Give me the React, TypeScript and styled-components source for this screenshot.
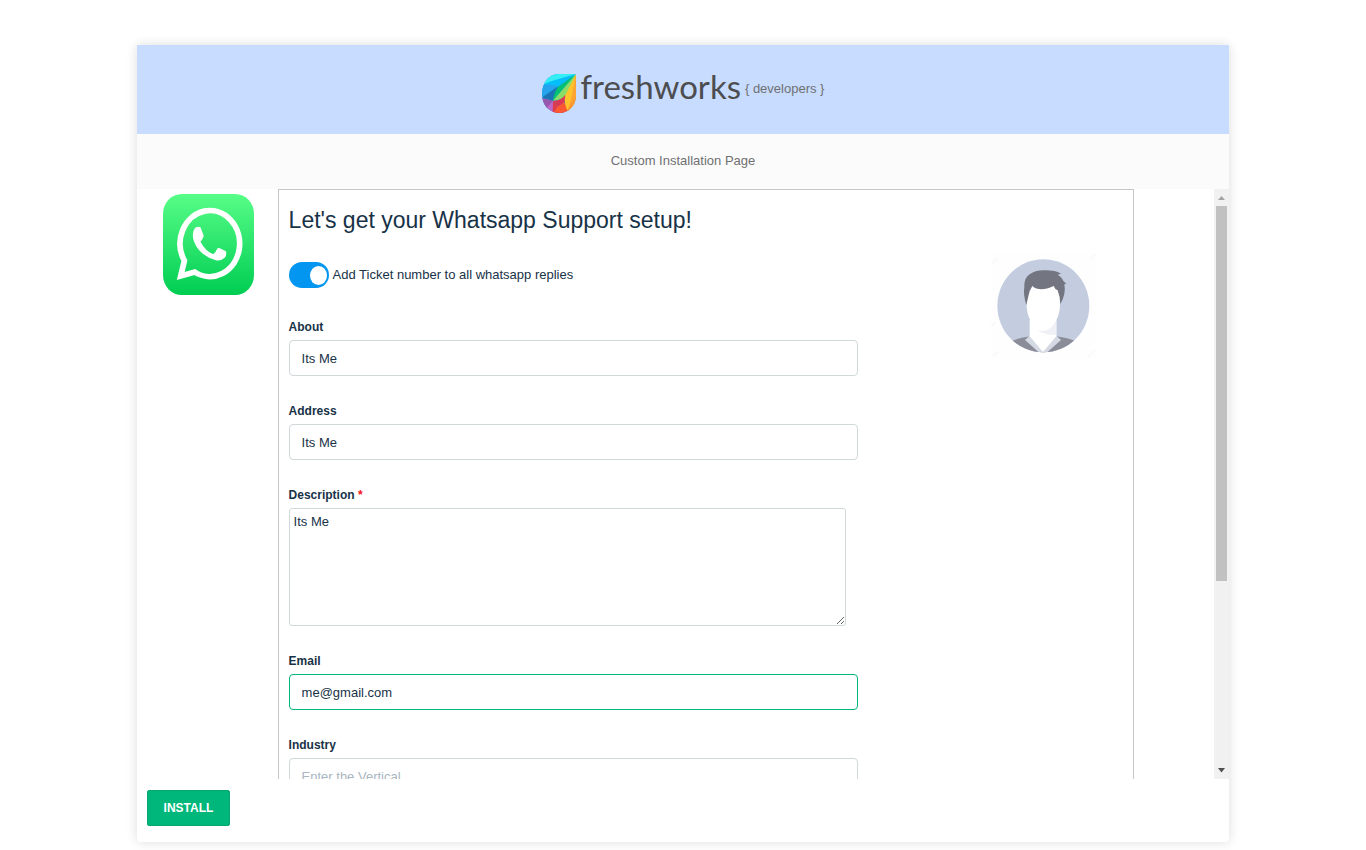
import React from "react";
import styled, { createGlobalStyle } from "styled-components";

const GlobalStyle = createGlobalStyle`
  *, *::before, *::after { box-sizing: border-box; }
  body {
    min-height: 100vh;
    margin: 0;
    padding: 45px 0 8px;
    background: #fff;
    color: #183247;
    font: 13px/16px "Liberation Sans", Arial, sans-serif;
  }
`;

const Card = styled.div`
  display: flex;
  flex-direction: column;
  width: 80%;
  height: calc(100vh - 53px);
  margin: 0 auto;
  background: #fff;
  border-radius: 4px;
  box-shadow: 0 0 12px rgba(0, 0, 0, 0.14);
`;

const Header = styled.header`
  display: flex;
  align-items: center;
  justify-content: center;
  flex: none;
  height: 89px;
  padding-bottom: 2px;
  background: #c7dcff;
  color: #6f7071;
`;

const LogoMark = styled.svg`
  width: 34px;
  height: 39px;
  margin: 9px 5px 0 0;
`;

const Wordmark = styled.span`
  margin: 0 4px 6px 0;
  color: #4d4d4f;
  font: 33px/40px Lato, sans-serif;
`;

const SubHeader = styled.h1`
  flex: none;
  margin: 0;
  padding: 19px 0 20px;
  background: #fbfbfb;
  color: #6f7071;
  font-size: 13px;
  font-weight: 400;
  text-align: center;
`;

const Body = styled.div`
  display: flex;
  flex: 1;
  min-height: 0;
`;

const ScrollArea = styled.main`
  display: flex;
  align-items: flex-start;
  flex: 1;
  min-width: 0;
  padding-right: 80px;
  overflow-y: auto;
  scrollbar-width: none;
`;

const AppIconColumn = styled.div`
  flex: none;
  width: 141px;
  padding: 5px 0 0 26px;
`;

const AppIcon = styled.svg`
  display: block;
  width: 91px;
  height: 101px;
`;

const Panel = styled.section`
  display: grid;
  grid-template-columns: minmax(0, 1fr) 265px;
  flex: 1;
  min-width: 0;
  min-height: 880px;
  padding: 14px 10px;
  border: 1px solid #c6c6c6;
`;

const Title = styled.h2`
  margin: 0 0 26px;
  font-size: 23px;
  line-height: 32px;
  font-weight: 400;
`;

const ToggleRow = styled.label`
  display: flex;
  align-items: center;
  gap: 4px;
  margin-bottom: 31px;
`;

const Toggle = styled.input`
  appearance: none;
  display: flex;
  align-items: center;
  justify-content: flex-end;
  width: 40px;
  height: 26px;
  margin: 0;
  padding: 0 2px;
  border-radius: 13px;
  background: #b8c2cc;

  &:checked { background: #0396f0; }

  &::after {
    content: "";
    width: 17px;
    height: 19px;
    border-radius: 50%;
    background: #fff;
  }
`;

const Field = styled.div`
  margin-bottom: 27px;
`;

const FieldLabel = styled.label`
  display: block;
  margin-bottom: 5px;
  font-size: 12px;
  font-weight: 700;
`;

const Required = styled.span`
  color: #f5121d;
`;

const TextInput = styled.input<{ $active?: boolean }>`
  display: block;
  width: 100%;
  height: 36px;
  padding: 0 12px;
  border: 1px solid ${(p) => (p.$active ? "#00b77b" : "#d0d8da")};
  border-radius: 4px;
  outline: none;
  background: #fff;
  color: inherit;
  font: inherit;

  &::placeholder { color: #a9b6c0; }
`;

const TextArea = styled.textarea`
  display: block;
  width: calc(100% - 12px);
  height: 118px;
  padding: 5px 4px;
  border: 1px solid #d0d8da;
  border-radius: 3px;
  outline: none;
  color: inherit;
  font: inherit;
`;

const AvatarColumn = styled.div`
  display: flex;
  justify-content: flex-end;
  padding: 49px 26px 0 0;
`;

const Avatar = styled.svg`
  width: 106px;
  height: 106px;
`;

const ScrollTrack = styled.div`
  display: flex;
  flex-direction: column;
  align-items: center;
  flex: none;
  width: 15px;
  background: #f1f1f1;
`;

const ScrollThumb = styled.div`
  flex: 375;
  width: 11px;
  background: #c1c1c1;
`;

const ScrollRest = styled.div`
  flex: 181;
`;

const ScrollArrow = styled.svg`
  flex: none;
  width: 15px;
  height: 17px;
`;

const Footer = styled.footer`
  flex: none;
  padding: 11px 10px 16px;
`;

const InstallButton = styled.button`
  display: block;
  height: 36px;
  padding: 0 16px;
  border: 1px solid #08a672;
  border-radius: 2px;
  background: #00b77b;
  color: #fff;
  font: 700 12px/16px "Liberation Sans", Arial, sans-serif;
`;

function FreshworksMark() {
  return (
    <LogoMark viewBox="0 0 102 115" preserveAspectRatio="none" aria-hidden="true">
      <clipPath id="drop">
        <path d="M50 0H96Q102 0 102 6V62C102 94 80 115 51 115S0 92 0 60C0 24 22 0 50 0Z" />
      </clipPath>
      <g clipPath="url(#drop)">
        <rect width="102" height="115" fill="#1ba0e9" />
        <path d="M0 0H102V6L5 31Z" fill="#35eef3" />
        <path d="M5 31L24 22L102 0L46 38Z" fill="#05bffa" />
        <path d="M0 30L46 34L0 68Z" fill="#26a3ed" />
        <path d="M0 69L48 37L32 79Z" fill="#1b75b5" />
        <path d="M102 0L48 38Q35 56 33 79Z" fill="#00c174" />
        <path d="M102 0L33 79Q60 78 76 58Q91 38 102 0Z" fill="#8ade65" />
        <path d="M0 71L33 79L15 105L0 95Z" fill="#9856ad" />
        <path d="M33 79L13 101L40 118Z" fill="#bd68c7" />
        <path d="M33 79L68 116L32 115Z" fill="#dc3b50" />
        <path d="M70 61L67 83L82 110L60 116L34 115Z" fill="#fb5934" />
        <path d="M33 79Q58 79 70 61L67 83L48 96Z" fill="#d93954" />
        <path d="M102 0L70 62Q65 91 78 110L102 100Z" fill="#ffc42c" />
        <path d="M102 42L76 108L102 100Z" fill="#ff972f" />
        <path d="M102 0L84 89L102 68Z" fill="#ffa632" />
      </g>
    </LogoMark>
  );
}

function WhatsappIcon() {
  return (
    <AppIcon viewBox="0 0 272 303" preserveAspectRatio="none" role="img" aria-label="WhatsApp">
      <linearGradient id="wa" x1="0" y1="0" x2="0" y2="1">
        <stop offset="0" stopColor="#57fd87" />
        <stop offset="1" stopColor="#00cd52" />
      </linearGradient>
      <rect width="272" height="303" rx="56" ry="60" fill="url(#wa)" />
      <path
        d="M53 246L64 200A89 99 0 1 1 95 234Z"
        fill="none"
        stroke="#fff"
        strokeWidth="17"
      />
      <path
        d="M95 103Q103 96 112 100L121 123Q123 129 112 143Q127 171 150 181Q157 176 162 164Q165 160 170 163L188 172Q191 180 186 190Q174 202 158 199Q108 184 92 141Q85 117 95 103Z"
        fill="#fff"
      />
    </AppIcon>
  );
}

function AvatarPicture() {
  return (
    <Avatar viewBox="32 38 318 318" role="img" aria-label="Profile picture">
      <rect x="32" y="38" width="318" height="318" fill="#fefefe" />
      <path
        d="M36 70L52 52M330 56L346 42M38 348L54 334M322 350L342 330M34 256L46 246"
        stroke="#f9f9f9"
        strokeWidth="6"
      />
      <clipPath id="face">
        <ellipse cx="189" cy="196.500" rx="138" ry="139.500" />
      </clipPath>
      <g clipPath="url(#face)">
        <rect x="50" y="56" width="280" height="282" fill="#c4cde0" />
        <path d="M80 308Q112 292 150 288H228Q262 292 300 308V340H80Z" fill="#8a8d98" />
        <path d="M148 286L188 334L180 340L134 299Z" fill="#d5d9e3" />
        <path d="M228 286L188 334L196 340L242 299Z" fill="#d5d9e3" />
        <path d="M148 240H228V288L188 336L148 288Z" fill="#fff" />
        <path d="M170 270Q205 274 228 240V284Q198 286 170 270Z" fill="#f0f1f6" />
        <path
          d="M139 140Q144 132 160 134H222Q238 140 239 160V190Q240 228 216 258Q188 284 163 260Q142 236 139 200Z"
          fill="#fff"
        />
        <path
          d="M138 194Q128 162 132 140Q130 112 150 100Q170 88 196 90Q224 90 242 100L232 103Q246 112 249 122L258 130L252 132Q258 160 240 192Q239 168 232 150Q224 148 220 137Q198 147 184 147Q166 147 156 137Q146 152 144 168Z"
          fill="#737681"
        />
      </g>
    </Avatar>
  );
}

export default function App() {
  return (
    <>
      <GlobalStyle />
      <Card>
        <Header>
          <FreshworksMark />
          <Wordmark>freshworks</Wordmark>
          <span>{"{ developers }"}</span>
        </Header>
        <SubHeader>Custom Installation Page</SubHeader>
        <Body>
          <ScrollArea>
            <AppIconColumn>
              <WhatsappIcon />
            </AppIconColumn>
            <Panel>
              <form id="settings" onSubmit={(e) => e.preventDefault()}>
                <Title>Let's get your Whatsapp Support setup!</Title>
                <ToggleRow>
                  <Toggle type="checkbox" defaultChecked />
                  Add Ticket number to all whatsapp replies
                </ToggleRow>
                <Field>
                  <FieldLabel htmlFor="about">About</FieldLabel>
                  <TextInput id="about" defaultValue="Its Me" />
                </Field>
                <Field>
                  <FieldLabel htmlFor="address">Address</FieldLabel>
                  <TextInput id="address" defaultValue="Its Me" />
                </Field>
                <Field>
                  <FieldLabel htmlFor="description">
                    Description <Required>*</Required>
                  </FieldLabel>
                  <TextArea id="description" defaultValue="Its Me" />
                </Field>
                <Field>
                  <FieldLabel htmlFor="email">Email</FieldLabel>
                  <TextInput id="email" type="email" defaultValue="me@gmail.com" $active />
                </Field>
                <Field>
                  <FieldLabel htmlFor="industry">Industry</FieldLabel>
                  <TextInput id="industry" placeholder="Enter the Vertical" />
                </Field>
              </form>
              <AvatarColumn>
                <AvatarPicture />
              </AvatarColumn>
            </Panel>
          </ScrollArea>
          <ScrollTrack aria-hidden="true">
            <ScrollArrow viewBox="0 0 15 17">
              <path d="M4 11L7.500 7L11 11Z" fill="#a3a3a3" />
            </ScrollArrow>
            <ScrollThumb />
            <ScrollRest />
            <ScrollArrow viewBox="0 0 15 17">
              <path d="M4 6L7.500 10.500L11 6Z" fill="#505050" />
            </ScrollArrow>
          </ScrollTrack>
        </Body>
        <Footer>
          <InstallButton type="submit" form="settings">INSTALL</InstallButton>
        </Footer>
      </Card>
    </>
  );
}
